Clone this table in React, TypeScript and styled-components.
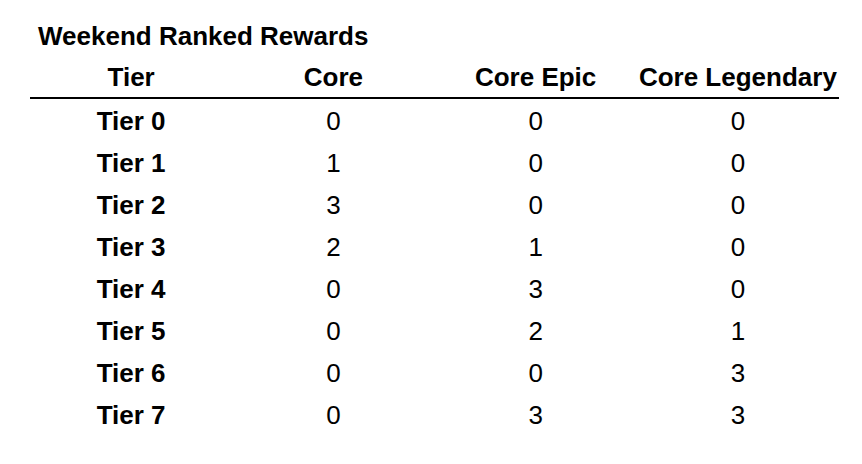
import React from 'react';
import styled, { createGlobalStyle } from 'styled-components';

const GlobalStyle = createGlobalStyle`
  html, body {
    margin: 0;
    padding: 0;
    background: #ffffff;
  }
  body {
    font-family: 'Liberation Sans', Arial, sans-serif;
    color: #000000;
  }
`;

const Page = styled.div`
  width: 862px;
  height: 464px;
  box-sizing: border-box;
  padding: 21px 0 0 30px;
  background: #ffffff;
`;

const Title = styled.h2`
  margin: 0 0 7px 8px;
  font-size: 26px;
  line-height: 30px;
  font-weight: 700;
`;

const Table = styled.table`
  width: 809px;
  table-layout: fixed;
  border-collapse: collapse;
  font-size: 26px;
`;

const HeadCell = styled.th`
  height: 39px;
  padding: 0;
  line-height: 39px;
  font-weight: 700;
  text-align: center;
  white-space: nowrap;
  border-bottom: 2px solid #000;
`;

const Cell = styled.td<{ $bold?: boolean }>`
  height: 40px;
  padding: 2px 0 0;
  line-height: 40px;
  text-align: center;
  font-weight: ${(p) => (p.$bold ? 700 : 400)};
`;

const rewards = [
  { tier: 'Tier 0', core: 0, epic: 0, legendary: 0 },
  { tier: 'Tier 1', core: 1, epic: 0, legendary: 0 },
  { tier: 'Tier 2', core: 3, epic: 0, legendary: 0 },
  { tier: 'Tier 3', core: 2, epic: 1, legendary: 0 },
  { tier: 'Tier 4', core: 0, epic: 3, legendary: 0 },
  { tier: 'Tier 5', core: 0, epic: 2, legendary: 1 },
  { tier: 'Tier 6', core: 0, epic: 0, legendary: 3 },
  { tier: 'Tier 7', core: 0, epic: 3, legendary: 3 },
];

const App = () => {
  return (
    <Page>
      <GlobalStyle />
      <Title>Weekend Ranked Rewards</Title>
      <Table>
        <thead>
          <tr>
            <HeadCell>Tier</HeadCell>
            <HeadCell>Core</HeadCell>
            <HeadCell>Core Epic</HeadCell>
            <HeadCell>Core Legendary</HeadCell>
          </tr>
        </thead>
        <tbody>
          {rewards.map((r) => (
            <tr key={r.tier}>
              <Cell $bold>{r.tier}</Cell>
              <Cell>{r.core}</Cell>
              <Cell>{r.epic}</Cell>
              <Cell>{r.legendary}</Cell>
            </tr>
          ))}
        </tbody>
      </Table>
    </Page>
  );
};

export default App;
